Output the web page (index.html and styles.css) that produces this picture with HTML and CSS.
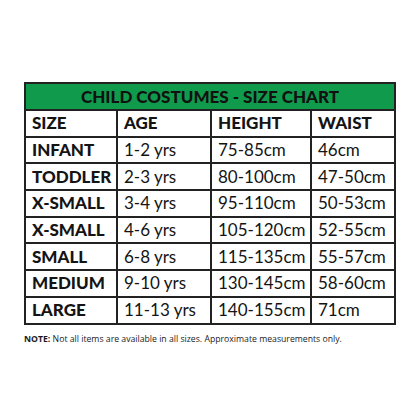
FILE: index.html
```html
<!DOCTYPE html>
<html>
<head>
<meta charset="utf-8">
<link rel="stylesheet" href="styles.css">
</head>
<body>
<div class="page">
  <table class="chart">
    <colgroup>
      <col class="c1"><col class="c2"><col class="c3"><col class="c4">
    </colgroup>
    <tr class="title-row"><th colspan="4">CHILD COSTUMES - SIZE CHART</th></tr>
    <tr class="head-row"><th>SIZE</th><th>AGE</th><th>HEIGHT</th><th>WAIST</th></tr>
    <tr><th>INFANT</th><td>1-2 yrs</td><td>75-85cm</td><td>46cm</td></tr>
    <tr><th>TODDLER</th><td>2-3 yrs</td><td>80-100cm</td><td>47-50cm</td></tr>
    <tr><th>X-SMALL</th><td>3-4 yrs</td><td>95-110cm</td><td>50-53cm</td></tr>
    <tr><th>X-SMALL</th><td>4-6 yrs</td><td>105-120cm</td><td>52-55cm</td></tr>
    <tr><th>SMALL</th><td>6-8 yrs</td><td>115-135cm</td><td>55-57cm</td></tr>
    <tr><th>MEDIUM</th><td>9-10 yrs</td><td>130-145cm</td><td>58-60cm</td></tr>
    <tr><th>LARGE</th><td>11-13 yrs</td><td>140-155cm</td><td>71cm</td></tr>
  </table>
  <p class="note"><b>NOTE:</b> Not all items are available in all sizes. Approximate measurements only.</p>
</div>
</body>
</html>
```
FILE: styles.css
```css
html, body {
  margin: 0;
  padding: 0;
  background: #ffffff;
}
.page {
  padding: 82px 0 0 24px;
  font-family: "Lato", "Open Sans", sans-serif;
  color: #141414;
}
.chart {
  border-collapse: collapse;
  width: 370px;
  table-layout: fixed;
  border: 2px solid #222;
}
.c1 { width: 92px; }
.c2 { width: 94px; }
.c3 { width: 100px; }
.c4 { width: 84px; }
.chart th, .chart td {
  border: 2px solid #222;
  padding: 0 0 0 6px;
  text-align: left;
  font-size: 17px;
  line-height: 20px;
  height: 26.7px;
  box-sizing: border-box;
  white-space: nowrap;
  overflow: hidden;
}
.chart th {
  font-weight: 900;
}
.chart td {
  font-weight: 400;
  padding-left: 6px;
}
.title-row th {
  background: #0f9b4b;
  text-align: center;
  padding: 0;
  height: 27px;
  color: #111;
}
.note {
  margin: 8px 0 0 0;
  font-family: "Open Sans", "Lato", sans-serif;
  font-size: 8.7px;
  color: #1a1a1a;
}
.note b {
  font-weight: 700;
}
```
